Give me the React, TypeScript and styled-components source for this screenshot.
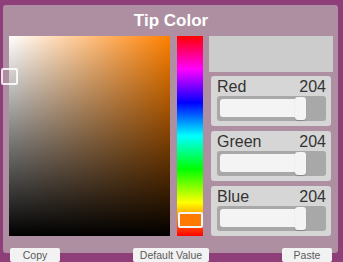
import styled, { createGlobalStyle } from 'styled-components';

const GlobalStyle = createGlobalStyle`
  html, body {
    margin: 0;
    padding: 0;
    background: #8e3e78;
    font-family: "Liberation Sans", Arial, sans-serif;
  }
`;

const channels = [
  { name: 'Red', value: 204 },
  { name: 'Green', value: 204 },
  { name: 'Blue', value: 204 },
];

const Page = styled.div`
  width: 343px;
  height: 262px;
  padding: 5px 5px 0 3px;
  box-sizing: border-box;
`;

const Panel = styled.div`
  background: #ae8fa2;
  border-radius: 3px;
  padding: 0 5px 12px 6px;
`;

const Title = styled.div`
  height: 31px;
  line-height: 31px;
  text-align: center;
  color: #ffffff;
  font-weight: bold;
  font-size: 17px;
`;

const Body = styled.div`
  display: flex;
  align-items: flex-start;
`;

const SatValBox = styled.div`
  position: relative;
  width: 161px;
  height: 200px;
  background: linear-gradient(to top, #000 0%, rgba(0, 0, 0, 0) 100%),
    linear-gradient(to right, #fff 0%, #ff8000 100%);
`;

const SatValMarker = styled.div`
  position: absolute;
  left: -8px;
  top: 32px;
  width: 13px;
  height: 13px;
  border: 2px solid rgba(255, 255, 255, 0.85);
  border-radius: 2px;
`;

const HueBar = styled.div`
  position: relative;
  width: 26px;
  height: 200px;
  margin-left: 7px;
  background: linear-gradient(
    to bottom,
    #ff0000 0%,
    #ff00ff 16.67%,
    #0000ff 33.33%,
    #00ffff 50%,
    #00ff00 66.67%,
    #ffff00 83.33%,
    #ff0000 100%
  );
`;

const HueMarker = styled.div`
  position: absolute;
  left: 1px;
  top: 176px;
  width: 21px;
  height: 12px;
  border: 2px solid #f4f4f4;
  border-radius: 2px;
  background: #ff7a00;
`;

const Side = styled.div`
  display: flex;
  flex-direction: column;
  width: 124px;
  margin-left: 6px;
`;

const Preview = styled.div`
  height: 36px;
  background: #cccccc;
  margin-bottom: 4px;
`;

const Group = styled.div`
  height: 50px;
  margin: 0 2px 5px;
  padding: 2px 5px 0 6px;
  box-sizing: border-box;
  background: #d6d6d6;
  border-radius: 3px;
`;

const GroupHead = styled.div`
  display: flex;
  justify-content: space-between;
  height: 18px;
  line-height: 18px;
  font-size: 16px;
  color: #333333;
`;

const Track = styled.div`
  position: relative;
  height: 25px;
  background: #a8a8a8;
  border-radius: 3px;
`;

const Fill = styled.div`
  position: absolute;
  left: 3px;
  top: 3px;
  bottom: 4px;
  background: #f4f4f4;
  border-radius: 3px;
`;

const Handle = styled.div`
  position: absolute;
  top: 1px;
  bottom: 1px;
  width: 11px;
  background: #f4f4f4;
  border-radius: 3px;
  box-shadow: 0 1px 1px rgba(0, 0, 0, 0.2);
`;

const Buttons = styled.div`
  display: flex;
  justify-content: space-between;
  margin: -5px 6px 0 7px;
`;

const Button = styled.div<{ $w: number }>`
  width: ${(p) => p.$w}px;
  height: 14px;
  line-height: 14px;
  text-align: center;
  background: #f2f2f2;
  border-radius: 2px;
  color: #5a5a5a;
  font-size: 10.5px;
`;

const App = () => {
  return (
    <>
      <GlobalStyle />
      <Page>
        <Panel>
          <Title>Tip Color</Title>
          <Body>
            <SatValBox>
              <SatValMarker />
            </SatValBox>
            <HueBar>
              <HueMarker />
            </HueBar>
            <Side>
              <Preview />
              {channels.map((c) => {
                const inner = 103;
                const pos = Math.round((c.value / 255) * inner);
                return (
                  <Group key={c.name}>
                    <GroupHead>
                      <span>{c.name}</span>
                      <span>{c.value}</span>
                    </GroupHead>
                    <Track>
                      <Fill style={{ width: pos - 2 }} />
                      <Handle style={{ left: pos - 4 }} />
                    </Track>
                  </Group>
                );
              })}
            </Side>
          </Body>
        </Panel>
        <Buttons>
          <Button $w={50}>Copy</Button>
          <Button $w={76}>Default Value</Button>
          <Button $w={50}>Paste</Button>
        </Buttons>
      </Page>
    </>
  );
};

export default App;
